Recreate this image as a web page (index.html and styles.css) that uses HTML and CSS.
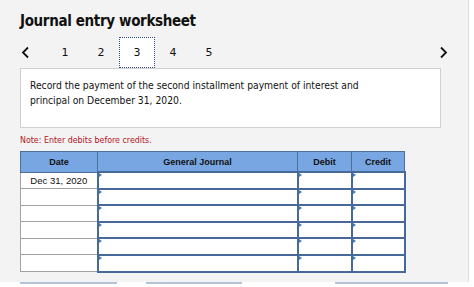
FILE: index.html
```html
<!DOCTYPE html>
<html>
<head>
<meta charset="utf-8">
<link rel="stylesheet" href="styles.css">
</head>
<body>
<div class="panel">
  <h1 class="title">Journal entry worksheet</h1>
  <div class="nav">
    <span class="arrow">
      <svg width="9" height="13" viewBox="0 0 9 13"><path d="M7 1.5 L2 6.5 L7 11.5" fill="none" stroke="#111" stroke-width="1.8"/></svg>
    </span>
    <div class="tabs">
      <span class="tab">1</span>
      <span class="tab">2</span>
      <span class="tab active">3</span>
      <span class="tab">4</span>
      <span class="tab">5</span>
    </div>
    <span class="arrow right">
      <svg width="9" height="13" viewBox="0 0 9 13"><path d="M2 1.5 L7 6.5 L2 11.5" fill="none" stroke="#111" stroke-width="1.8"/></svg>
    </span>
  </div>
  <div class="prompt">Record the payment of the second installment payment of interest and principal on December 31, 2020.</div>
  <p class="note">Note: Enter debits before credits.</p>
  <table class="journal">
    <thead>
      <tr><th class="c-date">Date</th><th class="c-gj">General Journal</th><th class="c-dr">Debit</th><th class="c-cr">Credit</th></tr>
    </thead>
    <tbody>
      <tr><td class="date">Dec 31, 2020</td><td class="in"></td><td class="in"></td><td class="in"></td></tr>
      <tr><td class="date"></td><td class="in"></td><td class="in"></td><td class="in"></td></tr>
      <tr><td class="date"></td><td class="in"></td><td class="in"></td><td class="in"></td></tr>
      <tr><td class="date"></td><td class="in"></td><td class="in"></td><td class="in"></td></tr>
      <tr><td class="date"></td><td class="in"></td><td class="in"></td><td class="in"></td></tr>
      <tr><td class="date"></td><td class="in"></td><td class="in"></td><td class="in"></td></tr>
    </tbody>
  </table>
</div>
<div class="footer">
  <span class="bar b1"></span>
  <span class="bar b2"></span>
  <span class="bar b3"></span>
</div>
</body>
</html>
```
FILE: styles.css
```css
html, body {
  margin: 0;
  padding: 0;
  background: #ffffff;
}
body {
  width: 474px;
  height: 287px;
  overflow: hidden;
}
.panel {
  box-sizing: border-box;
  width: 469px;
  height: 282px;
  background: #f3f3f3;
  border-right: 1px solid #dcdcdc;
  padding: 12px 0 0 20px;
  font-family: "DejaVu Sans", Verdana, sans-serif;
}
.title {
  margin: 0;
  font-family: "DejaVu Sans Condensed", "DejaVu Sans", sans-serif;
  font-stretch: condensed;
  font-size: 15px;
  letter-spacing: -0.35px;
  line-height: 18px;
  font-weight: bold;
  color: #111;
}
.nav {
  display: flex;
  align-items: center;
  height: 31px;
  margin-top: 7px;
  width: 428px;
}
.arrow {
  display: flex;
  width: 26px;
  padding-left: 1px;
}
.arrow.right {
  margin-left: auto;
  width: 9px;
}
.tabs {
  display: flex;
  height: 31px;
}
.tab {
  width: 36px;
  height: 31px;
  box-sizing: border-box;
  display: flex;
  align-items: center;
  justify-content: center;
  font-size: 11px;
  color: #111;
}
.tab.active {
  background: #fff;
  border: 1px dotted #2a4f86;
}
.prompt {
  box-sizing: border-box;
  width: 421px;
  height: 60px;
  background: #fff;
  border: 1px solid #cfcfcf;
  padding: 9px 70px 0 9px;
  font-family: "DejaVu Sans Condensed", "DejaVu Sans", sans-serif;
  font-stretch: condensed;
  font-size: 10.25px;
  line-height: 15px;
  color: #111;
}
.note {
  margin: 6px 0 0;
  font-family: "DejaVu Sans Condensed", "DejaVu Sans", sans-serif;
  font-stretch: condensed;
  font-size: 8.8px;
  line-height: 12px;
  color: #b5121b;
}
.journal {
  margin-top: 5px;
  border-collapse: collapse;
  font-family: "Liberation Sans", Arial, sans-serif;
  font-size: 9.6px;
  color: #111;
}
.journal th {
  background: #78a6e2;
  height: 19px;
  padding: 0;
  font-size: 9px;
  font-weight: bold;
  border: 1px solid #4d6f9c;
  text-align: center;
}
.c-date { width: 76px; }
.c-gj { width: 199px; }
.c-dr { width: 53px; }
.c-cr { width: 52px; }
.journal td {
  height: 14.6px;
  padding: 0;
  background: #fff;
}
.journal td.date {
  border: 1px solid #a2a2a2;
  text-align: center;
}
.journal td.in {
  border: 2px solid #47699a;
  position: relative;
}
.journal td.in::before {
  content: "";
  position: absolute;
  left: 0;
  top: 0;
  border-left: 3px solid #3f7cc4;
  border-top: 2px solid transparent;
  border-bottom: 2px solid transparent;
}
.footer {
  display: flex;
  height: 5px;
}
.bar {
  height: 2px;
  background: #b4c3d9;
}
.b1 { margin-left: 20px; width: 97px; }
.b2 { margin-left: 29px; width: 96px; }
.b3 { margin-left: 93px; width: 113px; }
```
